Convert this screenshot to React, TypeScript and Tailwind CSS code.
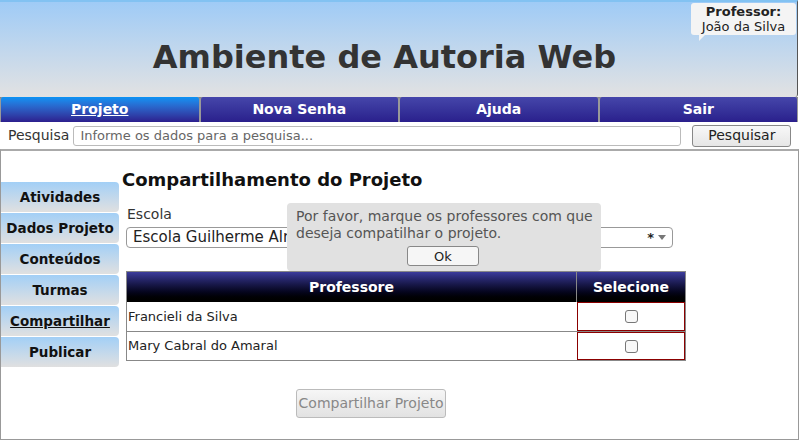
import React from "react";

const tabs = [
  { label: "Projeto", active: true },
  { label: "Nova Senha" },
  { label: "Ajuda" },
  { label: "Sair" },
];

const menu = ["Atividades", "Dados Projeto", "Conteúdos", "Turmas", "Compartilhar", "Publicar"];

const professores = ["Francieli da Silva", "Mary Cabral do Amaral"];

export default function App() {
  return (
    <div className="relative w-[800px] h-[440px] bg-white overflow-hidden font-['DejaVu_Sans',Verdana,sans-serif] text-[#222]">
      {/* Header */}
      <div className="relative h-[97px] w-[798px] border-t-2 border-[#82c2f2] border-r border-r-[#555] rounded-br-[3px] bg-gradient-to-b from-[#9fcbf6] to-[#e2e2e2] flex items-center justify-center">
        <h1 className="mt-[14px] mr-[28px] text-[32px] font-bold text-[#333]">Ambiente de Autoria Web</h1>
        <div className="absolute right-[1px] top-[1px] w-[105px] h-[32px] bg-[#f4f4f4] rounded-[3px] flex flex-col items-center justify-center text-[13px] leading-[15px]">
          <span className="font-bold">Professor:</span>
          <span>João da Silva</span>
          <span className="absolute left-[8px] bottom-[-6px] w-0 h-0 border-t-[6px] border-t-[#f4f4f4] border-r-[6px] border-r-transparent" />
        </div>
      </div>

      {/* Navigation */}
      <div className="flex h-[25px] w-[798px] bg-[#888]">
        {tabs.map((t) => (
          <div
            key={t.label}
            className={
              "w-[200px] flex items-center justify-center text-[14px] font-bold text-white rounded-t-[3px] border-x border-[#999] " +
              (t.active ? "bg-gradient-to-b from-[#0993f4] to-[#2c1e8e] underline" : "bg-gradient-to-b from-[#4646aa] to-[#2a1f8c]")
            }
          >
            {t.label}
          </div>
        ))}
      </div>

      {/* Search */}
      <div className="flex items-center h-[27px] px-[8px] gap-[4px]">
        <span className="text-[14px] text-[#333]">Pesquisa</span>
        <div className="w-[608px] h-[20px] border border-[#bbb] rounded-[3px] flex items-center px-[6px] text-[13px] text-[#666]">
          Informe os dados para a pesquisa...
        </div>
        <div className="ml-[7px] w-[99px] h-[22px] border border-[#888] rounded-[3px] bg-gradient-to-b from-[#f8f8f8] to-[#e6e6e6] flex items-center justify-center text-[14px] text-[#222]">
          Pesquisar
        </div>
      </div>

      {/* Main */}
      <div className="flex w-[799px] h-[291px] border-t-2 border-t-[#aaa] border-x border-x-[#999] border-b border-b-[#999]">
        <div className="w-[118px] mt-[31px] flex flex-col gap-[1px]">
          {menu.map((m) => (
            <div
              key={m}
              className={
                "h-[30px] flex items-center justify-center rounded-r-[4px] bg-gradient-to-b from-[#a2cff6] to-[#e0e0e0] text-[13.5px] font-bold text-[#111] " +
                (m === "Compartilhar" ? "underline" : "")
              }
            >
              {m}
            </div>
          ))}
        </div>

        <div className="relative flex-1 pl-[3px]">
          <h2 className="mt-[17px] text-[18px] font-bold text-[#111] leading-[24px]">Compartilhamento do Projeto</h2>
          <div className="ml-[5px] mt-[14px] text-[14px] text-[#333] leading-[16px]">Escola</div>
          <div className="ml-[4px] mt-[5px] w-[547px] h-[21px] border border-[#999] rounded-[4px] flex items-center px-[6px] text-[15px] text-[#222]">
            <span className="flex-1">Escola Guilherme Almeida</span>
            <span className="mr-[4px] text-[13px] font-bold">*</span>
            <span className="w-0 h-0 border-x-[4px] border-x-transparent border-t-[5px] border-t-[#777]" />
          </div>

          <div className="ml-[4px] mt-[23px] w-[560px] border border-[#888]">
            <div className="flex h-[30px] bg-gradient-to-b from-[#3c3c9c] to-[#000] text-white text-[14px] font-bold">
              <div className="w-[450px] flex items-center justify-center border-r border-[#888]">Professore</div>
              <div className="flex-1 flex items-center justify-center">Selecione</div>
            </div>
            {professores.map((p, i) => (
              <div key={p} className={"flex h-[29px] " + (i > 0 ? "border-t border-[#888]" : "")}>
                <div className="w-[450px] flex items-center pl-[1px] text-[13px] text-[#222]">{p}</div>
                <div className="flex-1 flex items-center justify-center border border-[#8b0000]">
                  <span className="w-[13px] h-[13px] border border-[#777] rounded-[3px] bg-[#f8f8f8]" />
                </div>
              </div>
            ))}
          </div>

          <div className="ml-[174px] mt-[28px] w-[150px] h-[29px] border border-[#bbb] rounded-[3px] bg-gradient-to-b from-[#f6f6f6] to-[#e2e2e2] flex items-center justify-center text-[14px] text-[#888]">
            Compartilhar Projeto
          </div>

          {/* Alert popup */}
          <div className="absolute left-[168px] top-[52px] w-[314px] h-[68px] bg-[#e1e1e1] rounded-[4px] pl-[9px] pr-[3px] pt-[5px] text-[14px] leading-[17px] text-[#555]">
            <p>Por favor, marque os professores com que deseja compatilhar o projeto.</p>
            <div className="ml-[111px] mt-[4px] w-[72px] h-[20px] border border-[#888] rounded-[3px] bg-[#f6f6f6] flex items-center justify-center text-[13px] text-[#222]">
              Ok
            </div>
          </div>
        </div>
      </div>
    </div>
  );
}
